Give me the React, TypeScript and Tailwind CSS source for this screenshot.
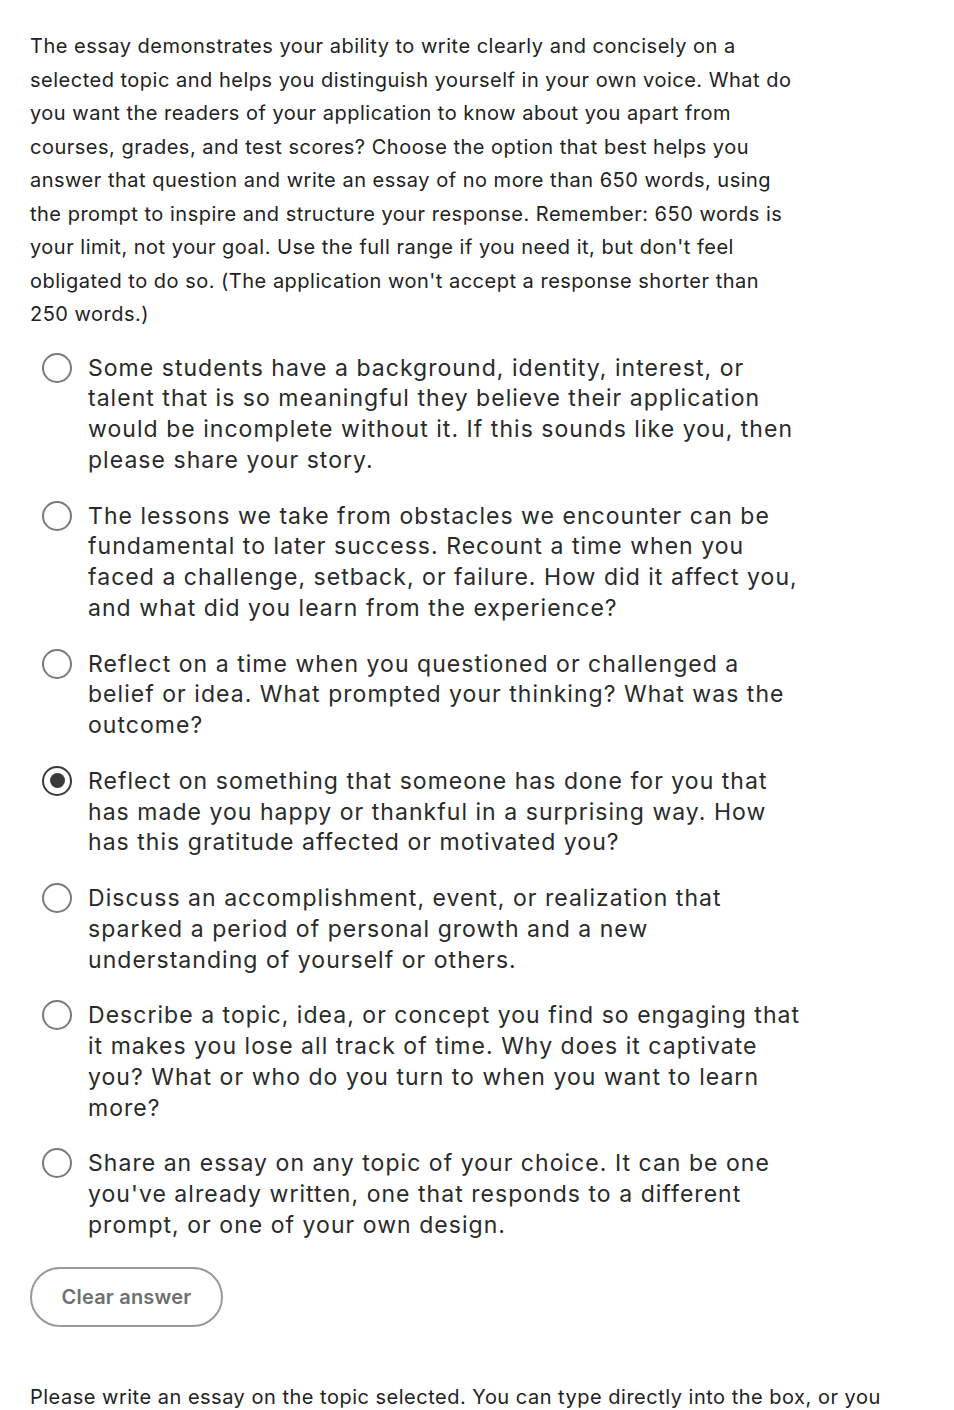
import React, { useState } from 'react';

const options = [
  "Some students have a background, identity, interest, or talent that is so meaningful they believe their application would be incomplete without it. If this sounds like you, then please share your story.",
  "The lessons we take from obstacles we encounter can be fundamental to later success. Recount a time when you faced a challenge, setback, or failure. How did it affect you, and what did you learn from the experience?",
  "Reflect on a time when you questioned or challenged a belief or idea. What prompted your thinking? What was the outcome?",
  "Reflect on something that someone has done for you that has made you happy or thankful in a surprising way. How has this gratitude affected or motivated you?",
  "Discuss an accomplishment, event, or realization that sparked a period of personal growth and a new understanding of yourself or others.",
  "Describe a topic, idea, or concept you find so engaging that it makes you lose all track of time. Why does it captivate you? What or who do you turn to when you want to learn more?",
  "Share an essay on any topic of your choice. It can be one you've already written, one that responds to a different prompt, or one of your own design.",
];

const Radio = ({ checked }: { checked: boolean }) => (
  <span
    className={
      'flex h-[30px] w-[30px] shrink-0 items-center justify-center rounded-full border-[2.5px] ' +
      (checked ? 'border-[#3a3a3a]' : 'border-[#7a7a7a]')
    }
  >
    {checked && <span className="h-[15px] w-[15px] rounded-full bg-[#3a3a3a]" />}
  </span>
);

export default function App() {
  const [selected, setSelected] = useState<number | null>(3);

  return (
    <div className="min-h-[1410px] bg-white px-[30px] pt-[30px] font-['Inter',sans-serif] text-[#222]">
      <p className="w-[770px] text-[20px] leading-[33.5px] tracking-[0.025em]">
        The essay demonstrates your ability to write clearly and concisely on a selected topic and helps you
        distinguish yourself in your own voice. What do you want the readers of your application to know about you
        apart from courses, grades, and test scores? Choose the option that best helps you answer that question and
        write an essay of no more than 650 words, using the prompt to inspire and structure your response. Remember:
        650 words is your limit, not your goal. Use the full range if you need it, but don't feel obligated to do so.
        (The application won't accept a response shorter than 250 words.)
      </p>

      <div className="mt-[21px] flex flex-col gap-[25px] pl-[12px]">
        {options.map((text, i) => (
          <label key={i} className="flex cursor-pointer items-start gap-[16px]" onClick={() => setSelected(i)}>
            <Radio checked={selected === i} />
            <span className="w-[716px] text-[23px] leading-[30.75px] tracking-[0.045em] text-[#2a2a2a]">{text}</span>
          </label>
        ))}
      </div>

      <button
        className="mt-[26px] h-[60px] w-[193px] rounded-full border-[2.5px] border-[#999] text-[20px] font-semibold tracking-[0.01em] text-[#6f6f6f]"
        onClick={() => setSelected(null)}
      >
        Clear answer
      </button>

      <p className="mt-[54px] w-[875px] text-[20px] leading-[33.5px] tracking-[0.025em]">
        Please write an essay on the topic selected. You can type directly into the box, or you can paste text from
        another source.
      </p>
    </div>
  );
}
